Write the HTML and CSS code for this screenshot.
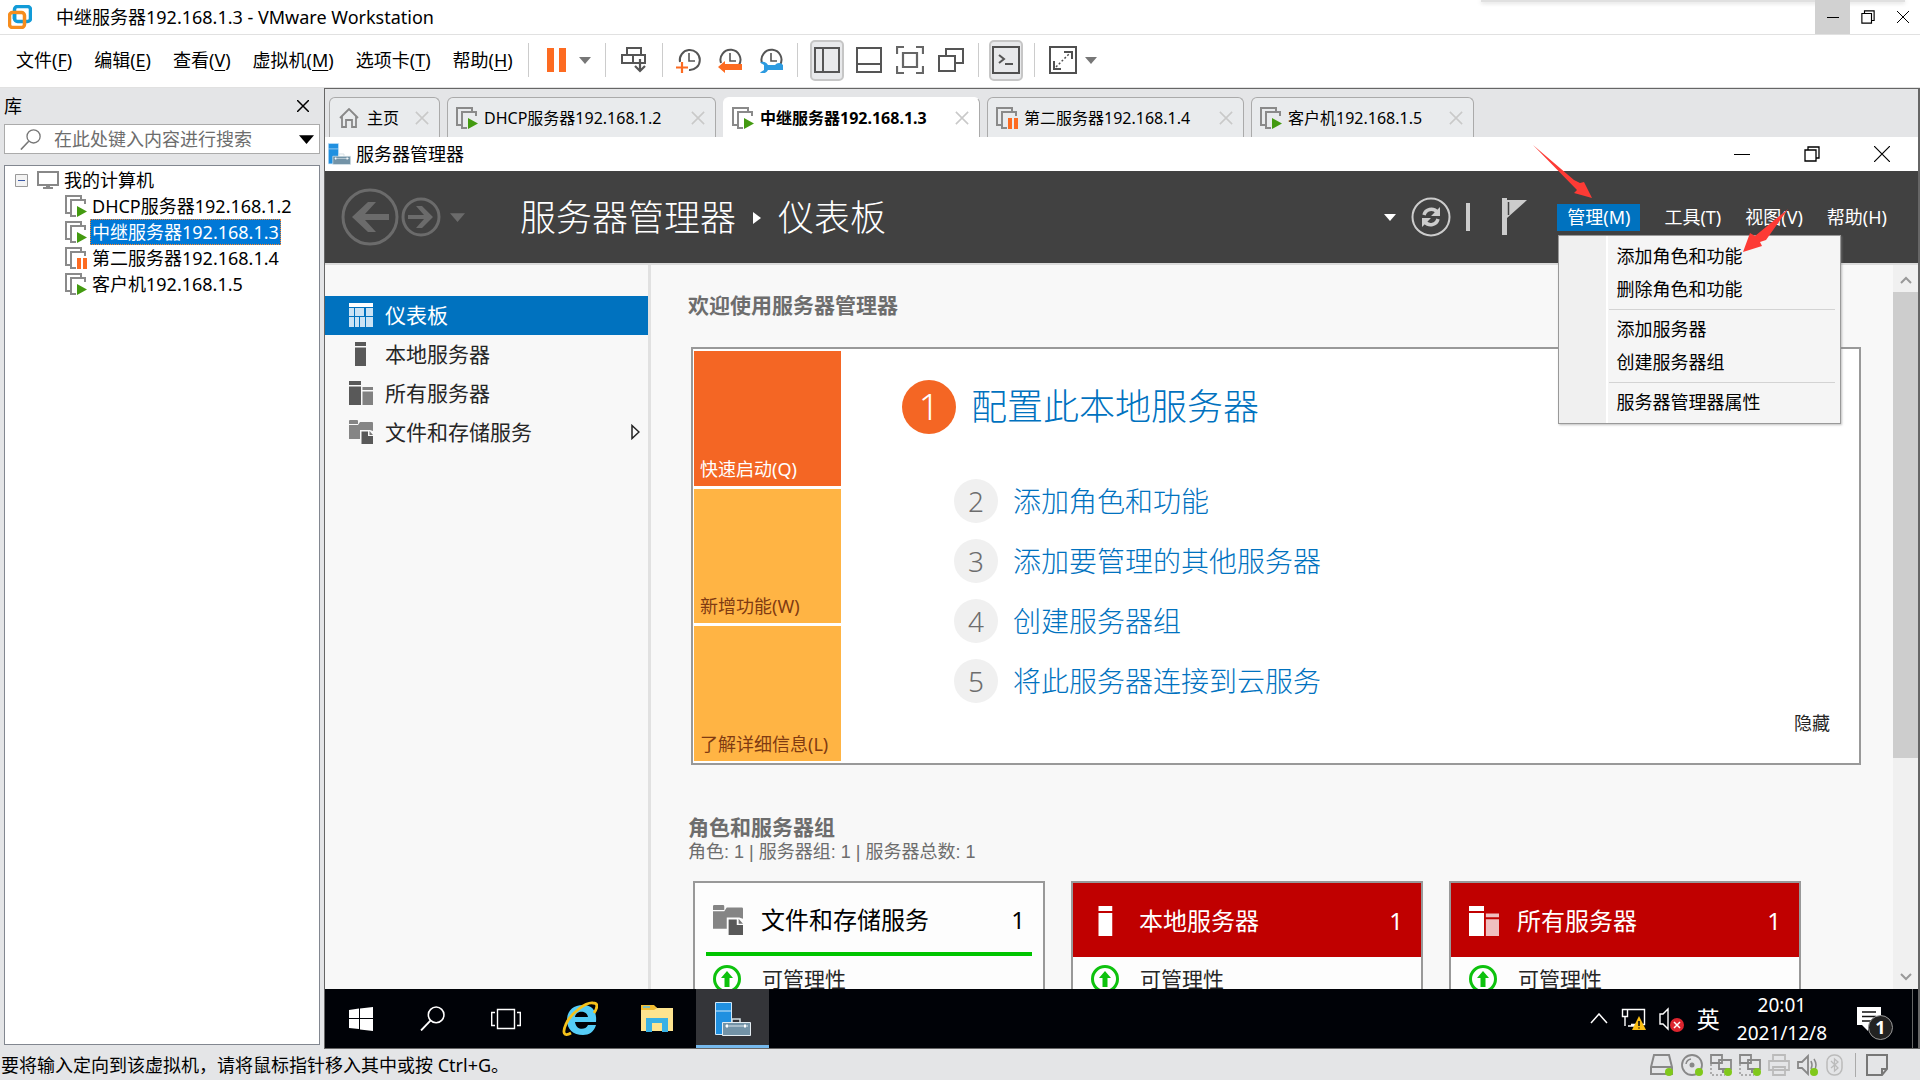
FILE: index.html
```html
<!DOCTYPE html>
<html lang="zh-CN">
<head>
<meta charset="utf-8">
<title>中继服务器192.168.1.3 - VMware Workstation</title>
<link rel="stylesheet" href="styles.css">
</head>
<body>
<svg class="defs" aria-hidden="true">
  <defs>
    <symbol id="vm" viewBox="0 0 22 22"><path d="M5 18H1V1h15v3" fill="none" stroke="#8a8a8a" stroke-width="2"/><path d="M20 9V5H6v16h5" fill="none" stroke="#8a8a8a" stroke-width="2"/></symbol>
    <symbol id="vm-on" viewBox="0 0 22 22"><use href="#vm"/><path d="M12 11l10 5.500-10 5.500z" fill="#439a10"/></symbol>
    <symbol id="vm-paused" viewBox="0 0 22 22"><use href="#vm"/><path d="M12 11h4v11h-4zM18 11h4v11h-4z" fill="#fd6b21"/></symbol>
    <symbol id="cross" viewBox="0 0 16 16"><path d="M1 1l14 14M15 1L1 15" fill="none" stroke="currentColor" stroke-width="1.800"/></symbol>
    <symbol id="lens" viewBox="0 0 24 24"><circle cx="15.500" cy="8.500" r="7.500" fill="none" stroke="currentColor" stroke-width="1.500"/><path d="M10 14l-9 9.500" stroke="currentColor" stroke-width="1.800"/></symbol>
    <symbol id="restore" viewBox="0 0 16 16"><path d="M1 4h11v11H1zM4 4V1h11v11h-3" fill="none" stroke="currentColor" stroke-width="1.300"/></symbol>
    <symbol id="caret" viewBox="0 0 12 7"><path d="M0 0h12L6 7z" fill="currentColor"/></symbol>
    <symbol id="clock" viewBox="0 0 26 26"><path d="M4 16a10 10 0 1 1 18 2" fill="none" stroke="#555" stroke-width="2"/><path d="M13 6v8h6" fill="none" stroke="#555" stroke-width="1.600"/></symbol>
    <symbol id="toolbox" viewBox="0 0 36 34"><path d="M.5.500h16v32H.5z" fill="#2090e0" stroke="#cfe8fa"/><path d="M.5 9h16" stroke="#cfe8fa"/><path d="M17 20v-3h8v3" fill="none" stroke="#d5dfe4" stroke-width="1.500"/><path d="M7.500 20.500h28v13h-28z" fill="#7393a7" stroke="#e4edf2"/><path d="M10 24h23" stroke="#dce6ec"/><path d="M12 22.500v3M30 22.500v3" stroke="#fff" stroke-width="2"/></symbol>
    <symbol id="server" viewBox="0 0 24 24"><path d="M6 0h11v4H6zM6 5.500h11V24H6z" fill="currentColor"/></symbol>
    <symbol id="servers" viewBox="0 0 24 24"><path d="M0 0h12v4H0zM0 5.500h12V24H0z" fill="currentColor"/><path d="M13.500 6H24v3H13.500zM13.500 10.500H24V24H13.500z" fill="currentColor" opacity=".75"/></symbol>
    <symbol id="folder" viewBox="0 0 24 24"><path d="M0 1q0-1 1-1h7q1 0 1 1v3H0zM0 5h9l2-3h12q1 0 1 1v8l-3-1H11v9H0z" fill="#858585"/><path d="M12.500 11.500h6.500v4.500h5v8H12.500z" fill="#595959"/><path d="M20.500 11l3.500 4h-3.500z" fill="#777"/></symbol>
    <symbol id="up" viewBox="0 0 28 28"><circle cx="14" cy="14" r="12.500" fill="#fff" stroke="#0ec20e" stroke-width="3"/><path d="M14 6l6 7h-3.500v9h-5v-9H8z" fill="#0ec20e"/></symbol>
    <symbol id="net" viewBox="0 0 22 22"><path d="M1 1h11v8H1zM9 6h12v9H9z" fill="#e4e5e7" stroke="#888" stroke-width="1.800"/><path d="M1 10v11h14" fill="none" stroke="#999" stroke-width="1.500" stroke-dasharray="2"/><path d="M13 15v4" stroke="#888" stroke-width="2"/><circle cx="18" cy="18" r="4" fill="#80c81b"/></symbol>
  </defs>
</svg>
<div class="app">
  <header class="titlebar">
    <svg class="logo" viewBox="0 0 24 24"><rect x="6.500" y="1.500" width="16" height="15" rx="3" fill="none" stroke="#129bd8" stroke-width="3.500"/><rect x="1.500" y="7.500" width="15" height="15" rx="3" fill="none" stroke="#f68d1e" stroke-width="3.500"/><path d="M6.500 9v5" stroke="#129bd8" stroke-width="3.500"/></svg>
    <h1>中继服务器192.168.1.3 - VMware Workstation</h1>
    <div class="hint"></div>
    <button class="win minimize" aria-label="最小化"><svg width="12" height="12" viewBox="0 0 12 12"><path d="M0 6.500h12" stroke="#000"/></svg></button>
    <button class="win" aria-label="还原"><svg width="14" height="14"><use href="#restore"/></svg></button>
    <button class="win" aria-label="关闭"><svg width="12" height="12" viewBox="0 0 12 12"><path d="M0 0l12 12M12 0L0 12" stroke="#000"/></svg></button>
  </header>
  <div class="toolbar">
    <nav class="menus">
      <button>文件(<u>F</u>)</button><button>编辑(<u>E</u>)</button><button>查看(<u>V</u>)</button><button>虚拟机(<u>M</u>)</button><button>选项卡(<u>T</u>)</button><button>帮助(<u>H</u>)</button>
    </nav>
    <div class="group split">
      <button aria-label="挂起"><svg width="20" height="24" viewBox="0 0 20 24"><path d="M0 0h7v24H0zM12 0h7v24h-7z" fill="#fd6b21"/></svg></button>
      <button aria-label="电源选项"><svg class="drop" width="12" height="7"><use href="#caret"/></svg></button>
    </div>
    <div class="group">
      <button aria-label="发送 Ctrl+Alt+Del"><svg width="26" height="26" viewBox="0 0 26 26"><path d="M6 1h14v7H6zM1 8h11v8H1zM12 8h12v8H12z" fill="none" stroke="#555" stroke-width="2"/><path d="M19 12v12M14 19l5 5 5-5" fill="none" stroke="#555" stroke-width="2.200"/></svg></button>
    </div>
    <div class="group snaps">
      <button aria-label="拍摄快照"><svg width="26" height="26" viewBox="0 0 26 26"><path d="M4 15a10 10 0 1 1 9 8" fill="none" stroke="#555" stroke-width="2"/><path d="M13 6v8h6" fill="none" stroke="#555" stroke-width="1.600"/><path d="M6 15v11M0 20.500h12" stroke="#fd6b21" stroke-width="2.200"/></svg></button>
      <button aria-label="恢复快照"><svg width="26" height="26" viewBox="0 0 26 26"><use href="#clock"/><path d="M1 20l7-6v3h17v6H8v3z" fill="#fd6b21"/></svg></button>
      <button aria-label="管理快照"><svg width="26" height="26" viewBox="0 0 26 26"><use href="#clock"/><path d="M2 15.500a5.500 5.500 0 0 1 8 2.500h7a5 5 0 0 1 8 0v5H10a5.500 5.500 0 0 1-8 2.500l4-2.500v-5z" fill="#2d9be0"/></svg></button>
    </div>
    <div class="group views">
      <button class="pressed" aria-label="显示库"><svg width="26" height="26" viewBox="0 0 26 26"><path d="M1 1h24v24H1z" fill="none" stroke="#555" stroke-width="2"/><path d="M9 1v24" stroke="#555" stroke-width="2"/></svg></button>
      <button aria-label="缩略图栏"><svg width="26" height="26" viewBox="0 0 26 26"><path d="M1 1h24v24H1zM1 17h24" fill="none" stroke="#555" stroke-width="2"/></svg></button>
      <button aria-label="全屏"><svg width="28" height="28" viewBox="0 0 28 28"><path d="M1 8V1h7M20 1h7v7M27 20v7h-7M8 27H1v-7M7 7h14v14H7z" fill="none" stroke="#666" stroke-width="2.200"/></svg></button>
      <button aria-label="Unity"><svg width="26" height="26" viewBox="0 0 26 26"><path d="M1 9h16v15H1zM8 9V2h17v14h-8" fill="none" stroke="#555" stroke-width="2"/></svg></button>
    </div>
    <div class="group">
      <button class="pressed" aria-label="控制台"><svg width="28" height="28" viewBox="0 0 28 28"><path d="M1 1h26v26H1z" fill="none" stroke="#505050" stroke-width="2"/><path d="M7 9l5 4-5 4M13 18h8" fill="none" stroke="#555" stroke-width="2"/></svg></button>
    </div>
    <div class="group split stretch">
      <button aria-label="拉伸"><svg width="28" height="28" viewBox="0 0 28 28"><path d="M1 1h26v26H1z" fill="none" stroke="#505050" stroke-width="2"/><path d="M15 6h8v7M5 15v8h7" fill="none" stroke="#505050" stroke-width="2"/><path d="M7 21L21 7" stroke="#505050" stroke-width="1.500" stroke-dasharray="2"/></svg></button>
      <button aria-label="拉伸选项"><svg class="drop" width="12" height="7"><use href="#caret"/></svg></button>
    </div>
  </div>
  <div class="work">
    <aside class="library">
      <div class="lib-head"><h2>库</h2><button aria-label="关闭库"><svg width="12" height="12" viewBox="0 0 12 12"><path d="M0 0l12 12M12 0L0 12" stroke="#000" stroke-width="1.500"/></svg></button></div>
      <div class="search"><svg class="lens" width="21" height="21"><use href="#lens"/></svg><input type="text" aria-label="搜索" placeholder="在此处键入内容进行搜索"><svg width="15" height="9"><use href="#caret"/></svg></div>
      <div class="tree">
        <div class="row root"><svg width="13" height="13" viewBox="0 0 13 13"><path d="M.5.500h12v12H.5z" fill="#f3f3f3" stroke="#999"/><path d="M3 6.500h7" stroke="#3a59a8"/></svg><svg width="22" height="18" viewBox="0 0 22 18"><path d="M1 1h20v13H1z" fill="none" stroke="#888" stroke-width="2"/><path d="M9 14h4v2h3v2H6v-2h3z" fill="#888"/></svg><span>我的计算机</span></div>
        <div class="row"><svg width="22" height="22"><use href="#vm-on"/></svg><span>DHCP服务器192.168.1.2</span></div>
        <div class="row selected"><svg width="22" height="22"><use href="#vm-on"/></svg><span>中继服务器192.168.1.3</span></div>
        <div class="row"><svg width="22" height="22"><use href="#vm-paused"/></svg><span>第二服务器192.168.1.4</span></div>
        <div class="row"><svg width="22" height="22"><use href="#vm-on"/></svg><span>客户机192.168.1.5</span></div>
      </div>
    </aside>
    <section class="console">
      <div class="tabs">
        <div class="tab home"><svg width="20" height="20" viewBox="0 0 20 20"><path d="M1 10l9-9 9 9M3 8v11h4v-7h6v7h4V8" fill="none" stroke="#888" stroke-width="1.800"/></svg><span>主页</span><button aria-label="关闭"><svg width="14" height="14"><use href="#cross"/></svg></button></div>
        <div class="tab wide"><svg width="22" height="22"><use href="#vm-on"/></svg><span>DHCP服务器192.168.1.2</span><button aria-label="关闭"><svg width="14" height="14"><use href="#cross"/></svg></button></div>
        <div class="tab active"><svg width="22" height="22"><use href="#vm-on"/></svg><span>中继服务器192.168.1.3</span><button aria-label="关闭"><svg width="14" height="14"><use href="#cross"/></svg></button></div>
        <div class="tab"><svg width="22" height="22"><use href="#vm-paused"/></svg><span>第二服务器192.168.1.4</span><button aria-label="关闭"><svg width="14" height="14"><use href="#cross"/></svg></button></div>
        <div class="tab short"><svg width="22" height="22"><use href="#vm-on"/></svg><span>客户机192.168.1.5</span><button aria-label="关闭"><svg width="14" height="14"><use href="#cross"/></svg></button></div>
      </div>
      <div class="guest-title"><svg width="23" height="22"><use href="#toolbox"/></svg><h2>服务器管理器</h2>
        <button aria-label="最小化"><svg width="16" height="16" viewBox="0 0 16 16"><path d="M0 8.500h16" stroke="#000"/></svg></button>
        <button aria-label="还原"><svg width="16" height="16"><use href="#restore"/></svg></button>
        <button aria-label="关闭"><svg width="16" height="16" viewBox="0 0 16 16"><path d="M0 0l16 16M16 0L0 16" stroke="#000" stroke-width="1.200"/></svg></button>
      </div>
      <div class="banner">
        <button class="back" aria-label="后退"><svg width="58" height="58" viewBox="0 0 58 58"><circle cx="29" cy="29" r="27" fill="none" stroke="#6b6b6b" stroke-width="3"/><path d="M27 14h8L24 26h24v6H24l11 12h-8L11 29z" fill="#6b6b6b"/></svg></button>
        <button aria-label="前进"><svg width="40" height="40" viewBox="0 0 40 40"><circle cx="20" cy="20" r="18" fill="none" stroke="#6b6b6b" stroke-width="3"/><path d="M21 9h-6l8 9H7v4h16l-8 9h6l11-11z" fill="#6b6b6b"/></svg></button>
        <button class="history" aria-label="历史记录"><svg width="15" height="9"><use href="#caret"/></svg></button>
        <div class="crumbs"><span>服务器管理器</span><svg width="8" height="12" viewBox="0 0 8 12"><path d="M0 0l8 6-8 6z" fill="#fff"/></svg><span>仪表板</span></div>
        <div class="banner-tools">
          <svg width="12" height="7"><use href="#caret"/></svg>
          <button aria-label="刷新"><svg width="40" height="40" viewBox="0 0 40 40"><circle cx="20" cy="20" r="18.500" fill="none" stroke="#ccc" stroke-width="2"/><path d="M13 18a7.500 7.500 0 0 1 13-3M27 22a7.500 7.500 0 0 1-13 3" fill="none" stroke="#ccc" stroke-width="3.500"/><path d="M29 10v9h-9zM11 30v-9h9z" fill="#ccc"/></svg></button>
          <i class="bar"></i>
          <button class="flag" aria-label="通知"><svg width="25" height="38" viewBox="0 0 25 38"><path d="M0 0h5v2h20L5 20v17H0z" fill="#ccc"/><path d="M6.500 4v13" stroke="#414141" stroke-width="1.500"/></svg></button>
        </div>
        <nav class="banner-menu">
          <div class="manage">
            <button class="open" aria-expanded="true">管理(M)</button>
            <div class="dropdown" role="menu">
              <button role="menuitem">添加角色和功能</button>
              <button role="menuitem">删除角色和功能</button>
              <hr>
              <button role="menuitem">添加服务器</button>
              <button role="menuitem">创建服务器组</button>
              <hr>
              <button role="menuitem">服务器管理器属性</button>
            </div>
            <svg class="marks" viewBox="0 0 260 110"><path d="M0 0L41 35 47 38 51 37 59 53 41 48 44 45z" fill="#fd3b35"/><path d="M255 64L233 95 227 97 229 101 210 107 217 88 222 91z" fill="#fd3b35"/></svg>
          </div>
          <button>工具(T)</button><button>视图(V)</button><button>帮助(H)</button>
        </nav>
      </div>
      <div class="guest-body">
        <nav class="side">
          <a class="current" href="#dashboard"><svg width="24" height="24" viewBox="0 0 24 24"><path d="M0 0h24v4H0z" fill="#fff"/><path d="M0 5h5v8H0zM0 14h5v10H0zM6 5h9v8H6zM11 14h5v10h-5zM6 14h4v10H6zM17 5h7v8h-7zM17 14h7v10h-7z" fill="#cbe3f4"/></svg><span>仪表板</span></a>
          <a href="#local"><svg width="24" height="24"><use href="#server"/></svg><span>本地服务器</span></a>
          <a href="#all"><svg width="24" height="24"><use href="#servers"/></svg><span>所有服务器</span></a>
          <a href="#files"><svg width="24" height="24"><use href="#folder"/></svg><span>文件和存储服务</span><svg class="more" width="9" height="16" viewBox="0 0 9 16"><path d="M1 1.500l7 6.500-7 6.500z" fill="none" stroke="#222" stroke-width="1.500"/></svg></a>
        </nav>
        <main class="dash">
          <h3>欢迎使用服务器管理器</h3>
          <section class="welcome">
            <div class="tiles"><button class="quick">快速启动(Q)</button><button>新增功能(W)</button><button>了解详细信息(L)</button></div>
            <ol class="steps">
              <li class="first"><b>1</b><a href="#s1">配置此本地服务器</a></li>
              <li><b>2</b><a href="#s2">添加角色和功能</a></li>
              <li><b>3</b><a href="#s3">添加要管理的其他服务器</a></li>
              <li><b>4</b><a href="#s4">创建服务器组</a></li>
              <li><b>5</b><a href="#s5">将此服务器连接到云服务</a></li>
            </ol>
            <button class="hide">隐藏</button>
          </section>
          <h3 class="roles">角色和服务器组</h3>
          <p class="counts">角色: 1 | 服务器组: 1 | 服务器总数: 1</p>
          <div class="cards">
            <article class="card ok"><header><svg width="30" height="30"><use href="#folder"/></svg><h4>文件和存储服务</h4><span>1</span></header><div class="line"><svg width="28" height="28"><use href="#up"/></svg><span>可管理性</span></div></article>
            <article class="card"><header><svg width="30" height="30"><use href="#server"/></svg><h4>本地服务器</h4><span>1</span></header><div class="line"><svg width="28" height="28"><use href="#up"/></svg><span>可管理性</span></div></article>
            <article class="card"><header><svg width="30" height="30"><use href="#servers"/></svg><h4>所有服务器</h4><span>1</span></header><div class="line"><svg width="28" height="28"><use href="#up"/></svg><span>可管理性</span></div></article>
          </div>
        </main>
        <div class="scroll">
          <svg width="12" height="8" viewBox="0 0 12 8"><path d="M1 7l5-5 5 5" fill="none" stroke="#999" stroke-width="2"/></svg>
          <div class="thumb"></div><div class="track"></div>
          <svg width="12" height="8" viewBox="0 0 12 8"><path d="M1 1l5 5 5-5" fill="none" stroke="#999" stroke-width="2"/></svg>
        </div>
      </div>
      <div class="taskbar">
        <button class="start" aria-label="开始"><svg width="24" height="24" viewBox="0 0 24 24"><path d="M0 3l10-1.500V11H0zM11 1.400L24 0v11H11zM0 12h10v10L0 21zM11 12h13v12l-13-1.600z" fill="#fff"/></svg></button>
        <button aria-label="搜索"><svg width="25" height="25"><use href="#lens"/></svg></button>
        <button aria-label="任务视图"><svg width="30" height="22" viewBox="0 0 30 22"><path d="M6.500 1.500h17v19h-17zM4 4.500H.7v13H4M26 4.500h3.300v13H26" fill="none" stroke="#fff" stroke-width="1.400"/></svg></button>
        <button class="ie" aria-label="Internet Explorer"><svg width="36" height="36" viewBox="0 0 36 36"><path fill-rule="evenodd" d="M34 21H13c1 8 10 9 13 3h8c-2 7-7 10-13 10C11 34 5 28 5 19S11 4 21 4s14 7 13 17zM13 16h13c-1-7-12-7-13 0z" fill="#55cdf7"/><path d="M32 12c4-6 4-10-1-10C24 1 9 12 4 23c-4 9-2 13 5 9" fill="none" stroke="#f5c21b" stroke-width="2.800"/></svg></button>
        <button class="explorer" aria-label="文件资源管理器"><svg width="32" height="27" viewBox="0 0 32 27"><path d="M0 1h13l3 2h16v23H0z" fill="#fde48f"/><path d="M0 0h13l3 3-3 2H0z" fill="#f2bd33"/><path d="M2 2h7" stroke="#5bc2ea" stroke-width="1.500"/><path d="M5 13h22v14h-6v-9H11v9H5z" fill="#38b1e5"/></svg></button>
        <button class="running" aria-label="服务器管理器"><svg width="36" height="34"><use href="#toolbox"/></svg></button>
        <div class="tray">
          <svg width="18" height="11" viewBox="0 0 18 11"><path d="M1 10l8-9 8 9" fill="none" stroke="#fff" stroke-width="1.500"/></svg>
          <svg width="25" height="22" viewBox="0 0 25 22"><path d="M6 1.500h17.500v15H10M1.500 1.500h5v7h-5zM4 8.500V18M7 18h7" fill="none" stroke="#fff" stroke-width="1.400"/><path d="M18 8l7 14H11z" fill="#fcbf14"/><path d="M18 13v5M18 19.500v1" stroke="#111" stroke-width="1.600"/></svg>
          <svg width="25" height="26" viewBox="0 0 25 26"><path d="M1 8h3l5-5v20l-5-5H1z" fill="none" stroke="#fff" stroke-width="1.400"/><circle cx="18" cy="19" r="7" fill="#dd252f"/><path d="M15 16l6 6M21 16l-6 6" stroke="#fff" stroke-width="1.500"/></svg>
          <span class="ime">英</span>
          <time>20:01<br>2021/12/8</time>
          <span class="notes"><svg width="24" height="24" viewBox="0 0 24 24"><path d="M0 0h24v18H12l-1 6-6-6H0z" fill="#fff"/><path d="M5 5h14M5 9.500h14M5 14h10" stroke="#111" stroke-width="1.300"/></svg><i>1</i></span>
        </div>
      </div>
    </section>
  </div>
  <footer class="status">
    <span>要将输入定向到该虚拟机，请将鼠标指针移入其中或按 Ctrl+G。</span>
    <div class="devices">
      <svg width="24" height="22" viewBox="0 0 24 22"><path d="M4 1h15l3 12v7H1v-7zM1 13h21" fill="none" stroke="#888" stroke-width="2"/><circle cx="19" cy="18" r="4" fill="#80c81b"/></svg>
      <svg width="22" height="22" viewBox="0 0 22 22"><circle cx="11" cy="11" r="10" fill="none" stroke="#888" stroke-width="1.800"/><circle cx="11" cy="11" r="2.500" fill="#888"/><path d="M5 10a6 6 0 0 1 5-5" fill="none" stroke="#888" stroke-width="1.500"/><circle cx="18" cy="18" r="4" fill="#80c81b"/></svg>
      <svg width="22" height="22"><use href="#net"/></svg>
      <svg width="22" height="22"><use href="#net"/></svg>
      <svg width="22" height="22" viewBox="0 0 22 22"><path d="M5 7V1h12v6M1 7h20v9H1zM5 13h12v8H5z" fill="#e4e5e7" stroke="#bbb" stroke-width="1.800"/></svg>
      <svg width="22" height="22" viewBox="0 0 22 22"><path d="M1 8h4l6-6v18l-6-6H1z" fill="none" stroke="#888" stroke-width="1.800"/><path d="M14 7q2 4 0 8M17 5q4 6 0 12" fill="none" stroke="#888" stroke-width="1.500"/><circle cx="17" cy="18" r="4" fill="#80c81b"/></svg>
      <svg width="18" height="22" viewBox="0 0 18 22"><rect x="1" y="1" width="15" height="20" rx="7" fill="none" stroke="#bbb" stroke-width="1.500"/><path d="M5 7l7 7-3.500 3V5L12 8l-7 6" fill="none" stroke="#bbb" stroke-width="1.300"/></svg>
      <i></i>
      <svg width="22" height="22" viewBox="0 0 22 22"><path d="M1 1h20v14l-5 6H1zM21 15h-5v6" fill="none" stroke="#777" stroke-width="2"/></svg>
    </div>
  </footer>
</div>
</body>
</html>
```
FILE: styles.css
```css
* { box-sizing: border-box; }
body {
  margin: 0;
  color: #000;
  background: #e4e5e7;
  font: 18px/26px "Noto Sans", "Noto Sans CJK SC", sans-serif;
}
h1, h2, h3, h4, p, ol { margin: 0; padding: 0; font-size: inherit; font-weight: 400; }
button {
  display: flex;
  align-items: center;
  justify-content: center;
  margin: 0;
  padding: 0;
  border: 0;
  background: none;
  color: inherit;
  font: inherit;
  white-space: nowrap;
}
button u { text-underline-offset: 3px; }
a { color: inherit; text-decoration: none; }
svg { display: block; flex: none; }
.defs { position: absolute; width: 0; height: 0; }
.app { display: flex; flex-direction: column; height: 100vh; overflow: hidden; }

.titlebar {
  display: flex;
  align-items: center;
  flex: none;
  height: 35px;
  padding-left: 8px;
  background: #fff;
  border-bottom: 1px solid #e1e1e1;
}
.logo { width: 24px; height: 24px; margin-right: 24px; }
.hint {
  align-self: flex-start;
  width: 424px;
  height: 2px;
  margin-left: auto;
  margin-right: -90px;
  background: #e0e0e0;
  box-shadow: 0 1px 4px #ccc;
}
.win { width: 35px; height: 34px; }
.win.minimize { background: #d1d1d1; z-index: 1; }

.toolbar {
  display: flex;
  align-items: center;
  flex: none;
  height: 53px;
  padding: 0 0 2px 16px;
  background: #fff;
  border-bottom: 1px solid #e1e1e1;
}
.menus { display: flex; gap: 22px; margin-right: 15px; }
.group {
  display: flex;
  align-items: center;
  height: 34px;
  padding: 0 15px;
  border-left: 1px solid #ccc;
}
.group.split { gap: 12px; padding: 0 14px 0 18px; }
.group.snaps { gap: 15px; padding: 0 13px; }
.group.views { gap: 14px; padding: 0 14px 0 12px; }
.group.stretch { gap: 8px; padding-left: 14px; }
.drop { color: #777; }
.pressed {
  width: 34px;
  height: 41px;
  border: 2px solid #c6c6c6;
  border-radius: 5px;
  background: #e8e9eb;
}
.views .pressed { margin-right: -2px; }
.group:has(> .pressed:only-child) { padding: 0 11px 0 10px; }

.work { display: flex; flex: 1; min-height: 0; }
.library { display: flex; flex-direction: column; flex: none; width: 324px; padding: 0 4px 4px; }
.lib-head { display: flex; align-items: center; justify-content: space-between; height: 36px; padding-right: 11px; }
.search {
  display: flex;
  align-items: center;
  height: 30px;
  padding-right: 5px;
  border: 1px solid #ababab;
  background: #fff;
}
.search .lens { margin: 0 13px 0 15px; color: #777; }
.search input {
  flex: 1;
  min-width: 0;
  padding: 0;
  border: 0;
  outline: 0;
  background: none;
  font: inherit;
}
.search input::placeholder { color: #6d6d6d; opacity: 1; }
.tree {
  flex: 1;
  margin-top: 11px;
  padding-top: 1px;
  border: 1px solid #828790;
  background: #fff;
}
.row { display: flex; align-items: center; height: 26px; padding-left: 60px; gap: 3px; }
.row span { padding: 0 1px; line-height: 24px; border: 1px solid transparent; white-space: nowrap; }
.root { padding-left: 10px; }
.root svg + svg { margin-left: 6px; }
.selected span { background: #0078d7; color: #fff; border: 1px dotted #ff8728; }

.console {
  display: flex;
  flex-direction: column;
  flex: 1;
  min-width: 0;
  border: 1px solid #666;
  border-right-width: 2px;
}
.tabs { display: flex; align-items: flex-end; flex: none; gap: 7px; height: 48px; padding-left: 4px; font-size: 16px; }
.tab {
  display: flex;
  align-items: center;
  width: 257px;
  height: 40px;
  padding: 0 10px 0 8px;
  gap: 6px;
  border: 1px solid #aaa;
  border-bottom: 0;
  border-radius: 6px 6px 0 0;
  background: #e9ebed;
  white-space: nowrap;
}
.tab button { margin-left: auto; color: #c9c9c9; }
.tab.home { width: 111px; padding-left: 9px; gap: 8px; }
.tab.wide { width: 269px; }
.tab.short { width: 223px; }
.tab.active { background: #fff; border-color: #fff; border-right-color: #aaa; font-weight: 700; }
.guest-title { display: flex; align-items: center; flex: none; height: 34px; padding-left: 3px; background: #fff; }
.guest-title h2 { margin: 0 auto 0 5px; }
.guest-title button { width: 70px; }
.guest-title button:last-child { margin-right: 1px; }

.banner {
  display: flex;
  align-items: center;
  flex: none;
  height: 94px;
  padding: 0 31px 0 16px;
  background: #414141;
  border-bottom: 2px solid #dcdcdc;
  color: #fff;
}
.back { margin-right: 2px; }
.history { margin-left: 9px; color: #6b6b6b; }
.crumbs {
  display: flex;
  align-items: center;
  gap: 17px;
  margin-left: 55px;
  padding-top: 2px;
  font-size: 36px;
  line-height: 48px;
  font-weight: 300;
  white-space: nowrap;
}
.banner-tools { display: flex; align-items: center; gap: 15px; margin-left: auto; }
.bar { width: 4px; height: 28px; background: #ccc; }
.flag { margin: 0 30px 0 17px; }
.banner-menu { display: flex; align-items: center; gap: 24px; }
.manage { position: relative; }
.open { width: 83px; height: 27px; background: #0072bf; }
.dropdown {
  position: absolute;
  z-index: 2;
  top: 31px;
  left: 1px;
  width: 283px;
  padding: 4px 5px;
  border: 1px solid #999;
  background: linear-gradient(90deg, #f0f0f0 47px, #fff 47px, #fff 49px, #f5f5f5 49px);
  box-shadow: 1px 1px 2px #8888;
  color: #000;
}
.dropdown button { width: 100%; height: 33px; justify-content: flex-start; padding-left: 52px; }
.dropdown hr { margin: 3px 0 3px 45px; border: 0; border-top: 1px solid #d3d3d3; }
.marks { position: absolute; z-index: 3; left: -24px; top: -59px; width: 260px; height: 110px; pointer-events: none; }

.guest-body { display: flex; flex: 1; min-height: 0; background: #f8f8f8; overflow: hidden; }
.side { flex: none; width: 326px; padding-top: 31px; border-right: 3px solid #e1e1e1; font-size: 21px; }
.side a { display: flex; align-items: center; height: 39px; padding: 0 8px 2px 24px; gap: 12px; color: #262626; }
.side .current { background: #0072bf; color: #fff; }
.side svg { color: #595959; }
.more { margin-left: auto; }
.dash { flex: 1; min-width: 0; padding: 26px 32px 0 37px; }
.dash h3 { color: #6d6d6d; font-size: 21px; font-weight: 700; line-height: 28px; }
.welcome {
  display: flex;
  height: 418px;
  margin: 28px 0 0 3px;
  padding: 2px 1px;
  border: 2px solid #999;
  background: #fff;
}
.tiles { display: flex; flex-direction: column; gap: 3px; width: 147px; }
.tiles button {
  flex: 1;
  align-items: flex-end;
  justify-content: flex-start;
  padding: 0 0 4px 6px;
  background: #ffb444;
  color: #7f3b12;
}
.tiles .quick { background: #f46624; color: #fff; }
.steps { flex: 1; padding: 29px 0 0 113px; list-style: none; color: #0072bf; font-size: 28px; font-weight: 300; }
.steps li { display: flex; align-items: center; height: 44px; gap: 15px; margin-bottom: 16px; }
.steps b {
  display: grid;
  place-items: center;
  width: 44px;
  height: 44px;
  border-radius: 50%;
  background: #f0f0f0;
  color: #6d6d6d;
  font-weight: 300;
}
.steps .first { height: 54px; margin: 0 0 45px -52px; font-size: 36px; }
.first b { width: 54px; height: 54px; background: #f46624; color: #fff; }
.hide { align-self: flex-end; margin: 0 28px 25px 0; color: #262626; }
.dash .roles { margin-top: 48px; }
.counts { color: #6d6d6d; font-family: "Liberation Sans", "Noto Sans CJK SC", sans-serif; line-height: 22px; }
.cards { display: grid; grid-template-columns: repeat(3, 352px); gap: 26px; margin: 18px 0 0 5px; }
.card { height: 200px; border: 2px solid #999; background: #fdfdfd; }
.card header {
  display: flex;
  align-items: center;
  height: 74px;
  padding: 2px 18px 0;
  background: #c00000;
  color: #fff;
  font-size: 24px;
}
.card h4 { margin: 0 auto 0 18px; }
.card.ok header { height: 73px; margin: 0 11px; padding: 4px 7px 0; border-bottom: 4px solid #00c400; background: none; color: #000; }
.card.ok .line { padding-top: 9px; }
.line { display: flex; align-items: center; gap: 21px; padding: 8px 18px; color: #262626; font-size: 21px; }
.scroll { display: flex; flex-direction: column; align-items: center; flex: none; width: 25px; padding: 11px 0 8px; background: #f0f0f0; }
.thumb { flex: 466; width: 100%; margin-top: 8px; background: #cdcdcd; }
.track { flex: 215; }

.taskbar { display: flex; flex: none; height: 59px; background: #000207; color: #fff; }
.taskbar button { width: 73px; }
.taskbar .start { width: 71px; }
.taskbar .ie { width: 76px; }
.taskbar .explorer { width: 78px; }
.taskbar .running { border-top: 3px solid #343539; border-bottom: 3px solid #76b9ed; background: #343539; }
.tray { display: flex; align-items: center; gap: 13px; margin-left: auto; padding-right: 19px; border-right: 1px solid #666; margin-right: 5px; }
.ime { margin-right: 4px; font-size: 23px; }
.tray time { font-size: 19px; line-height: 28px; text-align: center; }
.notes { display: flex; align-items: center; margin-left: 17px; }
.notes i {
  width: 25px;
  height: 25px;
  margin: 18px 0 0 -13px;
  border: 1px solid #999;
  border-radius: 50%;
  background: #222;
  font: 700 18px/23px "Noto Sans", sans-serif;
  text-align: center;
}

.status { display: flex; align-items: center; justify-content: space-between; flex: none; height: 31px; padding: 0 32px 0 1px; }
.devices { display: flex; align-items: center; gap: 7px; }
.devices i { width: 1px; height: 24px; margin: 0 3px 0 4px; background: #aaa; }
```
